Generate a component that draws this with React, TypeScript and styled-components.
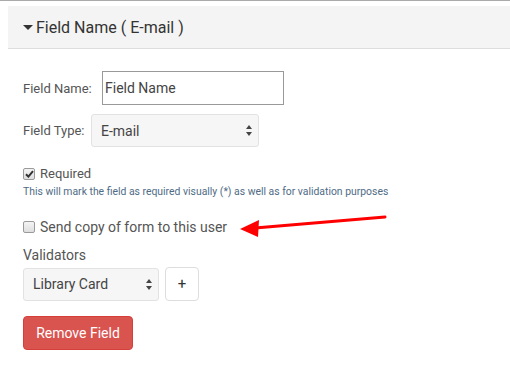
import React from "react";
import styled, { createGlobalStyle } from "styled-components";

const Global = createGlobalStyle`
  html, body { margin: 0; padding: 0; background: #fff; }
  body { font-family: Roboto, "Liberation Sans", sans-serif; color: #333; }
  * { box-sizing: border-box; }
`;

const Page = styled.div`
  width: 510px;
  height: 365px;
  border-top: 1px solid #aaa;
  padding: 5px 0 0 8px;
  position: relative;
  overflow: hidden;
`;

const Header = styled.div`
  height: 43px;
  width: 520px;
  background: #f4f4f4;
  border-bottom: 1px solid #ddd;
  display: flex;
  align-items: center;
  padding-left: 15px;
  font-size: 16px;
  color: #333;
  gap: 3px;
`;

const Caret = styled.span`
  width: 0;
  height: 0;
  border-left: 5px solid transparent;
  border-right: 5px solid transparent;
  border-top: 5px solid #333;
  margin-top: 1px;
`;

const Body = styled.div`
  padding: 22px 0 0 15px;
  display: flex;
  flex-direction: column;
`;

const Row = styled.div<{ $mb?: number }>`
  display: flex;
  align-items: center;
  margin-bottom: ${(p) => p.$mb ?? 0}px;
`;

const Label = styled.label<{ $w: number }>`
  width: ${(p) => p.$w}px;
  font-size: 13px;
  color: #555;
`;

const TextInput = styled.input`
  width: 182px;
  height: 34px;
  border: 1px solid #999;
  padding: 0 2px;
  font-family: Roboto, "Liberation Sans", sans-serif;
  font-size: 14px;
  color: #444;
  outline: none;
`;

const SelectBox = styled.div<{ $w: number }>`
  width: ${(p) => p.$w}px;
  height: 33px;
  background: #f6f6f6;
  border: 1px solid #e2e2e2;
  border-radius: 3px;
  display: flex;
  align-items: center;
  justify-content: space-between;
  padding: 0 6px 0 9px;
  font-size: 14px;
  color: #444;
`;

const Arrows = styled.svg`
  width: 6px;
  height: 11px;
`;

const CheckRow = styled.div<{ $mt: number }>`
  display: flex;
  align-items: center;
  gap: 5px;
  margin-top: ${(p) => p.$mt}px;
`;

const Box = styled.span`
  width: 12px;
  height: 12px;
  border: 1px solid #9a9a9a;
  border-radius: 2px;
  background: linear-gradient(#f4f4f4, #dedede);
  display: flex;
  align-items: center;
  justify-content: center;
`;

const CheckText = styled.span<{ $size: number }>`
  font-size: ${(p) => p.$size}px;
  color: #555;
`;

const Help = styled.div`
  font-size: 10.4px;
  color: #4f6b85;
  margin-top: 4px;
`;

const SectionLabel = styled.div`
  font-size: 14px;
  color: #555;
  margin-top: 12px;
  margin-bottom: 4px;
`;

const PlusButton = styled.button`
  width: 34px;
  height: 34px;
  margin-left: 6px;
  background: #fff;
  border: 1px solid #ddd;
  border-radius: 4px;
  font-size: 15px;
  color: #333;
  font-family: Roboto, "Liberation Sans", sans-serif;
  padding: 0;
`;

const DangerButton = styled.button`
  align-self: flex-start;
  margin-top: 15px;
  width: 110px;
  height: 34px;
  background: #d9534f;
  border: 1px solid #d43f3a;
  border-radius: 4px;
  color: #fff;
  font-size: 14px;
  font-family: Roboto, "Liberation Sans", sans-serif;
  padding: 0;
`;

const ArrowOverlay = styled.svg`
  position: absolute;
  left: 0;
  top: 0;
  pointer-events: none;
`;

const UpDown = () => (
  <Arrows viewBox="0 0 6 11">
    <path d="M3 0 L6 4 L0 4 Z M3 11 L6 7 L0 7 Z" fill="#444" />
  </Arrows>
);

export default function App() {
  return (
    <>
      <Global />
      <Page>
        <Header>
          <Caret />
          <span>Field Name ( E-mail )</span>
        </Header>
        <Body>
          <Row $mb={9}>
            <Label $w={79}>Field Name:</Label>
            <TextInput defaultValue="Field Name" />
          </Row>
          <Row>
            <Label $w={68}>Field Type:</Label>
            <SelectBox $w={168}>
              <span>E-mail</span>
              <UpDown />
            </SelectBox>
          </Row>
          <CheckRow $mt={19}>
            <Box>
              <svg width="9" height="8" viewBox="0 0 9 8">
                <path d="M1 4.2 L3.4 6.6 L8 1.2" stroke="#333" strokeWidth="2" fill="none" />
              </svg>
            </Box>
            <CheckText $size={13}>Required</CheckText>
          </CheckRow>
          <Help>This will mark the field as required visually (*) as well as for validation purposes</Help>
          <CheckRow $mt={21}>
            <Box />
            <CheckText $size={14}>Send copy of form to this user</CheckText>
          </CheckRow>
          <SectionLabel>Validators</SectionLabel>
          <Row>
            <SelectBox $w={136}>
              <span>Library Card</span>
              <UpDown />
            </SelectBox>
            <PlusButton>+</PlusButton>
          </Row>
          <DangerButton>Remove Field</DangerButton>
        </Body>
        <ArrowOverlay width="510" height="365" viewBox="0 0 510 365">
          <line x1="385" y1="216" x2="255" y2="227" stroke="#f00" strokeWidth="3" strokeLinecap="round" />
          <path d="M240 228 L259 219 L258 236 Z" fill="#f00" />
        </ArrowOverlay>
      </Page>
    </>
  );
}
